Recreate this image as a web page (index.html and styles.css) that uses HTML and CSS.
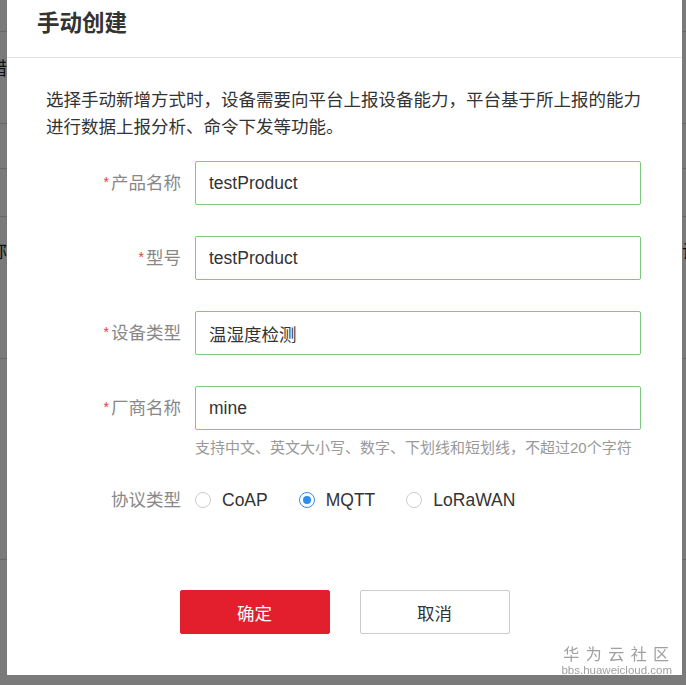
FILE: index.html
```html
<!DOCTYPE html>
<html lang="zh-CN">
<head>
    <meta charset="UTF-8">
    <meta name="viewport" content="width=device-width, initial-scale=1.0">
    <title>手动创建</title>
    <link rel="stylesheet" href="styles.css">
</head>
<body>
    <div class="page">
        <div class="page-row row-a"></div>
        <div class="page-row row-b"><span class="edge-l">错</span><span class="edge-r"></span></div>
        <div class="page-row row-c"></div>
        <div class="page-row row-d"></div>
        <div class="page-row row-e"><span class="edge-l">名称</span><span class="edge-r">设置</span></div>
        <div class="page-row row-f"></div>
    </div>
    <div class="mask"></div>

    <div class="dialog">
        <div class="dialog-header">
            <h1>手动创建</h1>
        </div>
        <div class="dialog-body">
            <p class="intro">选择手动新增方式时，设备需要向平台上报设备能力，平台基于所上报的能力进行数据上报分析、命令下发等功能。</p>
            <form id="create-form">
                <div class="form-group">
                    <label for="product"><span class="req">*</span>产品名称</label>
                    <input type="text" id="product" value="testProduct">
                </div>
                <div class="form-group">
                    <label for="model"><span class="req">*</span>型号</label>
                    <input type="text" id="model" value="testProduct">
                </div>
                <div class="form-group">
                    <label for="type"><span class="req">*</span>设备类型</label>
                    <input type="text" id="type" value="温湿度检测">
                </div>
                <div class="form-group has-hint">
                    <label for="vendor"><span class="req">*</span>厂商名称</label>
                    <div class="field">
                        <input type="text" id="vendor" value="mine">
                        <div class="hint">支持中文、英文大小写、数字、下划线和短划线，不超过20个字符</div>
                    </div>
                </div>
                <div class="form-group radio-group">
                    <label>协议类型</label>
                    <div class="radios">
                        <span class="radio"><i class="dot"></i>CoAP</span>
                        <span class="radio checked"><i class="dot"></i>MQTT</span>
                        <span class="radio"><i class="dot"></i>LoRaWAN</span>
                    </div>
                </div>
            </form>
        </div>
        <div class="dialog-footer">
            <button class="btn btn-primary">确定</button>
            <button class="btn">取消</button>
        </div>
    </div>

    <div class="watermark">
        <div class="wm-title">华 为 云 社 区</div>
        <div class="wm-url">bbs.huaweicloud.com</div>
    </div>
</body>
</html>
```

FILE: styles.css
```css
body {
    margin: 0;
    width: 686px;
    height: 685px;
    overflow: hidden;
    font-family: "Liberation Sans", "Noto Sans CJK SC", sans-serif;
    background-color: #fff;
    color: #333;
}
.page {
    display: flex;
    flex-direction: column;
}
.page-row {
    display: flex;
    align-items: flex-start;
    justify-content: space-between;
    border-bottom: 1px solid #d8d8d8;
    font-size: 18px;
    line-height: 22px;
    color: #222;
}
.row-a { height: 31px; }
.row-b { height: 92px; padding-top: 26px; box-sizing: border-box; }
.row-c { height: 44px; }
.row-d { height: 47px; }
.row-e { height: 142px; padding-top: 24px; box-sizing: border-box; }
.row-f { height: 200px; }
.edge-l {
    width: 7px;
    display: flex;
    justify-content: flex-end;
    white-space: nowrap;
}
.edge-r {
    width: 4px;
    white-space: nowrap;
}
.mask {
    position: fixed;
    inset: 0;
    background-color: rgba(0, 0, 0, 0.52);
}
.dialog {
    position: absolute;
    left: 7px;
    top: 0;
    width: 675px;
    height: 675px;
    background-color: #fff;
    display: flex;
    flex-direction: column;
}
.dialog-header {
    height: 58px;
    border-bottom: 1px solid #e2e2e2;
    box-sizing: border-box;
    padding: 9px 0 0 30px;
}
.dialog-header h1 {
    margin: 0;
    font-size: 22.5px;
    line-height: 30px;
    font-weight: bold;
    color: #333;
}
.dialog-body {
    padding: 29px 41px 0 39px;
}
.intro {
    margin: 0 0 20px;
    font-size: 17.5px;
    line-height: 27px;
    color: #333;
}
.form-group {
    display: flex;
    align-items: flex-start;
    margin-bottom: 31px;
}
.form-group label {
    width: 135px;
    height: 44px;
    flex-shrink: 0;
    margin-right: 14px;
    text-align: right;
    font-size: 17.5px;
    line-height: 44px;
    color: #888;
}
.req {
    color: #e4393c;
    font-size: 14px;
    line-height: 1;
    margin-right: 2px;
    vertical-align: 2px;
}
.form-group input {
    width: 100%;
    height: 44px;
    box-sizing: border-box;
    padding: 0 13px;
    border: 1px solid #7fc77f;
    border-radius: 2px;
    font-family: inherit;
    font-size: 17.5px;
    color: #333;
    outline: none;
}
.field {
    flex: 1;
}
.has-hint {
    margin-bottom: 19px;
}
.hint {
    margin-top: 7px;
    font-size: 15px;
    line-height: 22px;
    color: #999;
}
.radio-group {
    align-items: center;
    margin-bottom: 0;
}
.radios {
    display: flex;
    align-items: center;
    height: 44px;
}
.radio {
    display: flex;
    align-items: center;
    font-size: 17.5px;
    color: #333;
    margin-right: 31px;
}
.dot {
    width: 16px;
    height: 16px;
    box-sizing: border-box;
    border: 1px solid #ccc;
    border-radius: 50%;
    margin-right: 11px;
    display: flex;
    align-items: center;
    justify-content: center;
}
.radio.checked .dot {
    border-color: #3a8ee6;
}
.radio.checked .dot::after {
    content: "";
    width: 8px;
    height: 8px;
    border-radius: 50%;
    background-color: #2d8cf0;
}
.dialog-footer {
    display: flex;
    justify-content: center;
    gap: 30px;
    margin-top: 68px;
}
.btn {
    width: 150px;
    height: 44px;
    border: 1px solid #ccc;
    border-radius: 2px;
    background-color: #fff;
    font-family: inherit;
    font-size: 17.5px;
    color: #333;
    cursor: pointer;
}
.btn-primary {
    background-color: #e31f2d;
    border-color: #e31f2d;
    color: #fff;
}
.watermark {
    position: absolute;
    right: 14px;
    bottom: 8px;
    text-align: center;
    color: #a0a0a0;
}
.wm-title {
    font-size: 16px;
    line-height: 19px;
    letter-spacing: 1px;
}
.wm-url {
    font-size: 11.5px;
    line-height: 13px;
}
```
